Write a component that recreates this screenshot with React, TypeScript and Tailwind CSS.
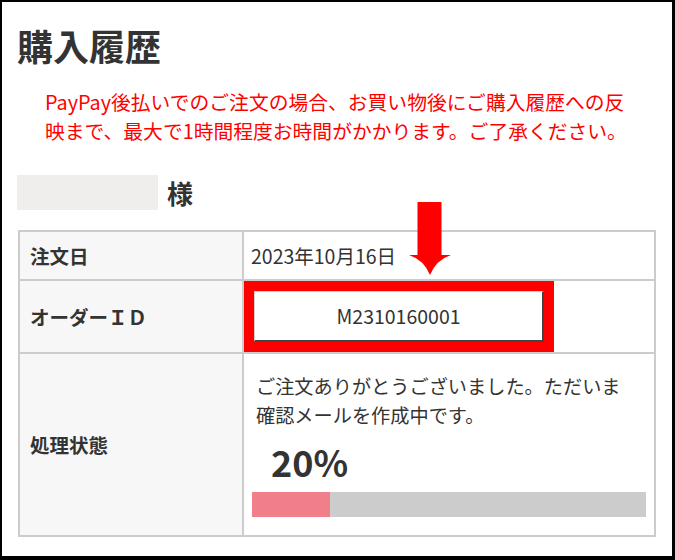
import React from "react";

export default function App() {
  return (
    <div className="relative w-[675px] h-[560px] bg-white border-black border-t-2 border-l-2 border-r-[3px] border-b-4 font-['Noto_Sans_CJK_JP',sans-serif] text-[#333]">
      <div className="px-4">
        <h1 className="mt-[25px] -ml-[1px] text-[36px] leading-[36px] font-bold">購入履歴</h1>
        <p className="mt-[25px] px-[27px] whitespace-nowrap text-[#ff0000] text-[19.8px] leading-[28.5px]">
          PayPay後払いでのご注文の場合、お買い物後にご購入履歴への反
          <br />
          映まで、最大で1時間程度お時間がかかります。ご了承ください。
        </p>
        <div className="mt-[30px] flex items-center gap-[9px]">
          <div className="-ml-[1px] w-[141px] h-[35px] bg-[#efeeec]" />
          <span className="text-[26px] leading-none font-bold">様</span>
        </div>
        <div className="mt-[20px] border-2 border-[#ccc] text-[19.5px]">
          <div className="flex h-[49px] border-b-2 border-[#ccc]">
            <div className="w-[224px] border-r-2 border-[#ccc] bg-[#f7f7f7] flex items-center pl-[10px] font-bold">
              注文日
            </div>
            <div className="flex-1 flex items-center px-[7px]">2023年10月16日</div>
          </div>
          <div className="flex h-[73px] border-b-2 border-[#ccc]">
            <div className="w-[224px] border-r-2 border-[#ccc] bg-[#f7f7f7] flex items-center pl-[10px] font-bold">
              オーダーＩＤ
            </div>
            <div className="flex-1 flex items-stretch">
              <div className="w-[310px] border-[10px] border-[#ff0000] flex">
                <div className="flex-1 bg-white border-t border-l border-[#d0d0d0] border-r-2 border-b-2 border-r-[#444] border-b-[#444] flex items-center justify-center text-[19.5px]">
                  M2310160001
                </div>
              </div>
            </div>
          </div>
          <div className="flex h-[181px]">
            <div className="w-[224px] border-r-2 border-[#ccc] bg-[#f7f7f7] flex items-center pl-[10px] font-bold">
              処理状態
            </div>
            <div className="flex-1 px-[8px] pt-[18px]">
              <p className="pl-[4px] text-[19.2px] leading-[28.5px]">
                ご注文ありがとうございました。ただいま
                <br />
                確認メールを作成中です。
              </p>
              <div className="h-[63px] flex items-center pl-[19px] text-[36px] font-bold leading-none">20%</div>
              <div className="h-[25px] bg-[#cccccc] flex">
                <div className="w-[78px] h-full bg-[#f07f8a]" />
              </div>
            </div>
          </div>
        </div>
      </div>
      <svg className="absolute left-[407px] top-[200px]" width="42" height="74" viewBox="0 0 42 74">
        <path d="M8.5 0 H32.5 V53 H42 Q27 58 21 73 Q15 58 0 53 H8.5 Z" fill="#ff0000" />
      </svg>
    </div>
  );
}
